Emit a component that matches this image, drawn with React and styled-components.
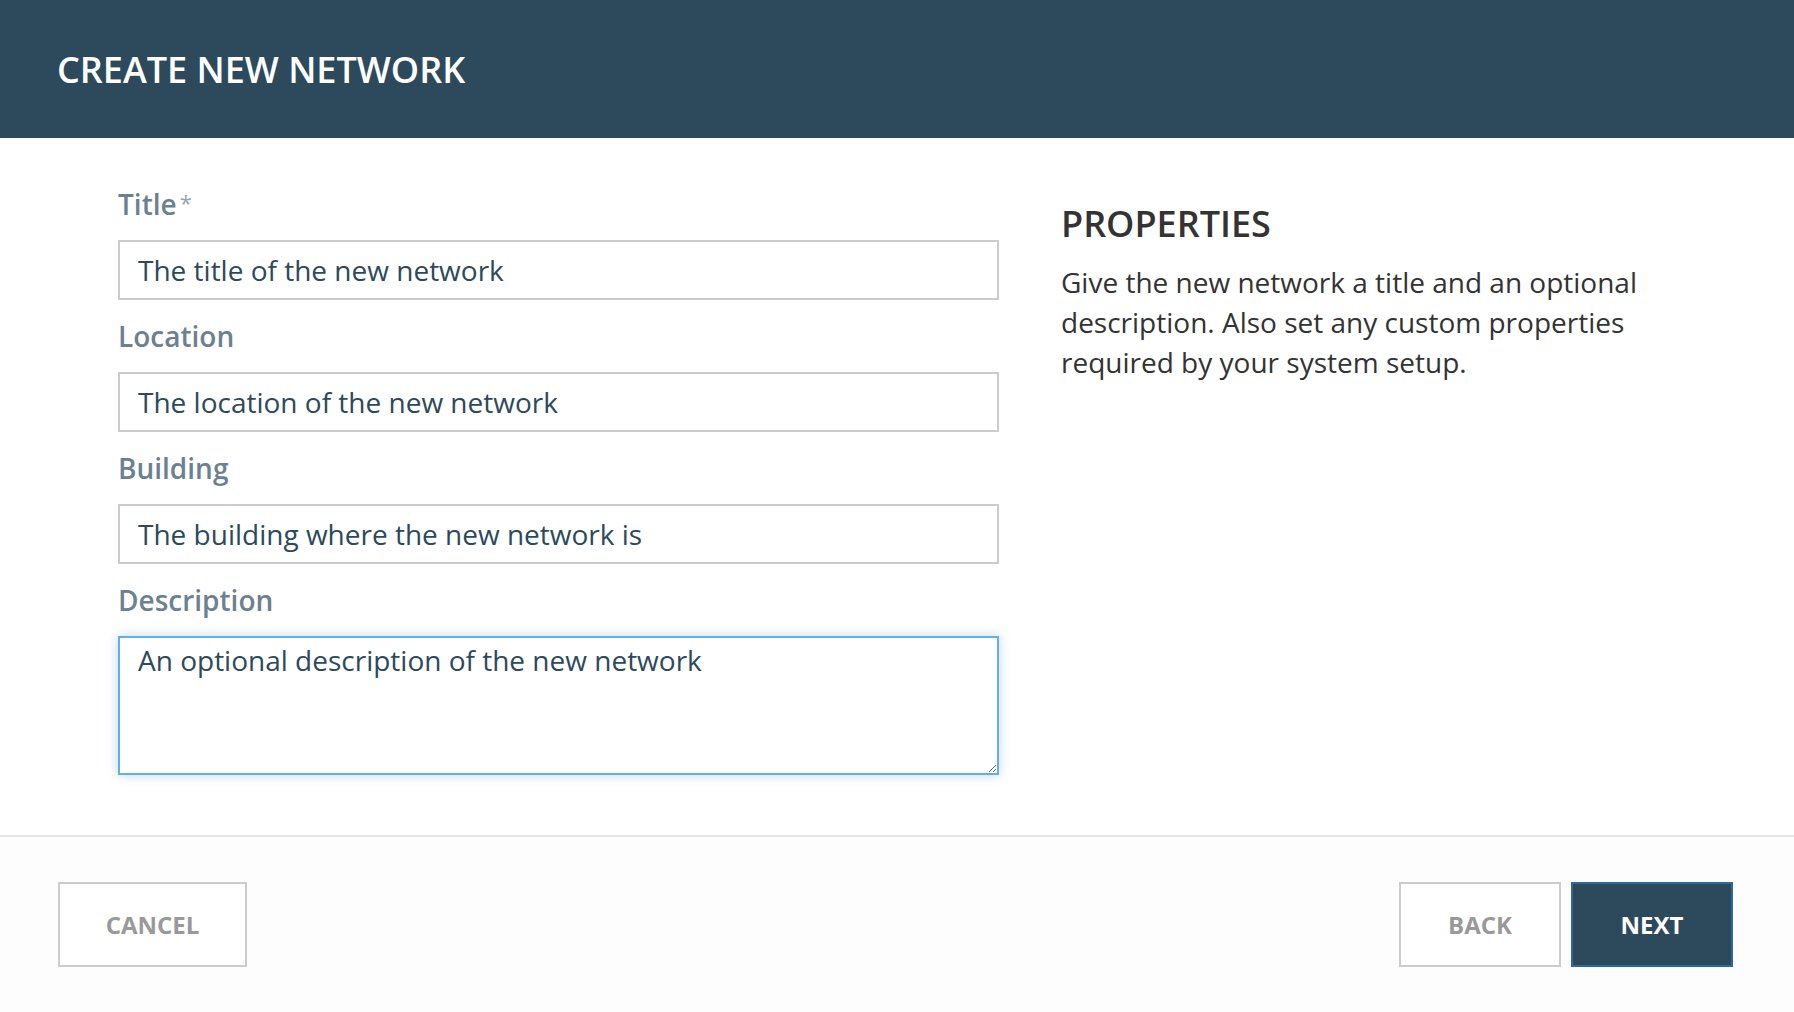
import styled, { createGlobalStyle } from "styled-components";

const navy = "#2c4a5c";
const labelColor = "#6c8190";
const borderGray = "#cccccc";

const GlobalStyle = createGlobalStyle`
  html, body {
    margin: 0;
    padding: 0;
    background: #ffffff;
    font-family: "Open Sans", "Liberation Sans", sans-serif;
  }
  * {
    box-sizing: border-box;
  }
`;

export default function App() {
  return (
    <>
      <GlobalStyle />
      <StyledPage>
        <StyledHeader>
          <StyledHeaderTitle>CREATE NEW NETWORK</StyledHeaderTitle>
        </StyledHeader>

        <StyledBody>
          <StyledForm>
            <StyledField>
              <StyledLabel>
                Title<StyledRequired>*</StyledRequired>
              </StyledLabel>
              <StyledInput defaultValue="The title of the new network" />
            </StyledField>
            <StyledField>
              <StyledLabel>Location</StyledLabel>
              <StyledInput defaultValue="The location of the new network" />
            </StyledField>
            <StyledField>
              <StyledLabel>Building</StyledLabel>
              <StyledInput defaultValue="The building where the new network is" />
            </StyledField>
            <StyledField>
              <StyledLabel>Description</StyledLabel>
              <StyledTextArea defaultValue="An optional description of the new network" />
            </StyledField>
          </StyledForm>

          <StyledAside>
            <StyledAsideTitle>PROPERTIES</StyledAsideTitle>
            <StyledAsideText>
              Give the new network a title and an optional description. Also
              set any custom properties required by your system setup.
            </StyledAsideText>
          </StyledAside>
        </StyledBody>

        <StyledFooter>
          <StyledButton>CANCEL</StyledButton>
          <StyledButtonGroup>
            <StyledButton width="162px">BACK</StyledButton>
            <StyledButton width="162px" primary>
              NEXT
            </StyledButton>
          </StyledButtonGroup>
        </StyledFooter>
      </StyledPage>
    </>
  );
}

const StyledPage = styled.div`
  display: flex;
  flex-direction: column;
  width: 100%;
  min-height: 1012px;
  background: #ffffff;
`;

const StyledHeader = styled.header`
  display: flex;
  align-items: center;
  height: 138px;
  padding: 0 57px;
  background: ${navy};
`;

const StyledHeaderTitle = styled.h1`
  margin: 0;
  color: #ffffff;
  font-size: 36px;
  font-weight: 600;
`;

const StyledBody = styled.main`
  display: grid;
  grid-template-columns: 881px 620px;
  column-gap: 62px;
  padding: 46px 118px 60px;
  border-bottom: 2px solid #e6e6e6;
`;

const StyledForm = styled.form`
  display: flex;
  flex-direction: column;
  gap: 16px;
`;

const StyledField = styled.div`
  display: flex;
  flex-direction: column;
  gap: 16px;
`;

const StyledLabel = styled.label`
  display: block;
  height: 40px;
  color: ${labelColor};
  font-size: 28px;
  font-weight: 600;
  line-height: 40px;
  overflow: hidden;
`;

const StyledRequired = styled.span`
  margin-left: 3px;
  color: #93a5b1;
  font-size: 22px;
  font-weight: 400;
  line-height: 1;
  vertical-align: 4px;
`;

const StyledInput = styled.input`
  display: block;
  width: 100%;
  height: 60px;
  padding: 0 18px;
  border: 2px solid ${borderGray};
  border-radius: 0;
  background: #ffffff;
  color: ${navy};
  font-family: inherit;
  font-size: 28px;
  outline: none;
`;

const StyledTextArea = styled.textarea`
  display: block;
  width: 100%;
  height: 139px;
  padding: 2px 18px;
  border: 2px solid #66aee9;
  border-radius: 0;
  box-shadow: 0 0 10px rgba(102, 174, 233, 0.45);
  background: #ffffff;
  color: ${navy};
  font-family: inherit;
  font-size: 28px;
  line-height: 40px;
  outline: none;
  resize: vertical;
`;

const StyledAside = styled.aside`
  padding-top: 17px;
`;

const StyledAsideTitle = styled.h2`
  margin: 0 0 15px;
  color: #333333;
  font-size: 36px;
  font-weight: 600;
  line-height: 46px;
`;

const StyledAsideText = styled.p`
  margin: 0;
  color: #333333;
  font-size: 28px;
  line-height: 40px;
`;

const StyledFooter = styled.footer`
  display: flex;
  flex: 1;
  justify-content: space-between;
  align-items: flex-start;
  padding: 45px 61px 44px 58px;
  background: #fdfdfd;
`;

const StyledButtonGroup = styled.div`
  display: flex;
  gap: 10px;
`;

const StyledButton = styled.button`
  width: ${({ width }) => width || "189px"};
  height: 85px;
  border: 2px solid ${({ primary }) => (primary ? "#2b6aa1" : borderGray)};
  border-radius: 0;
  background: ${({ primary }) => (primary ? navy : "#ffffff")};
  color: ${({ primary }) => (primary ? "#ffffff" : "#999999")};
  font-family: inherit;
  font-size: 24px;
  font-weight: 700;
  cursor: pointer;
`;
